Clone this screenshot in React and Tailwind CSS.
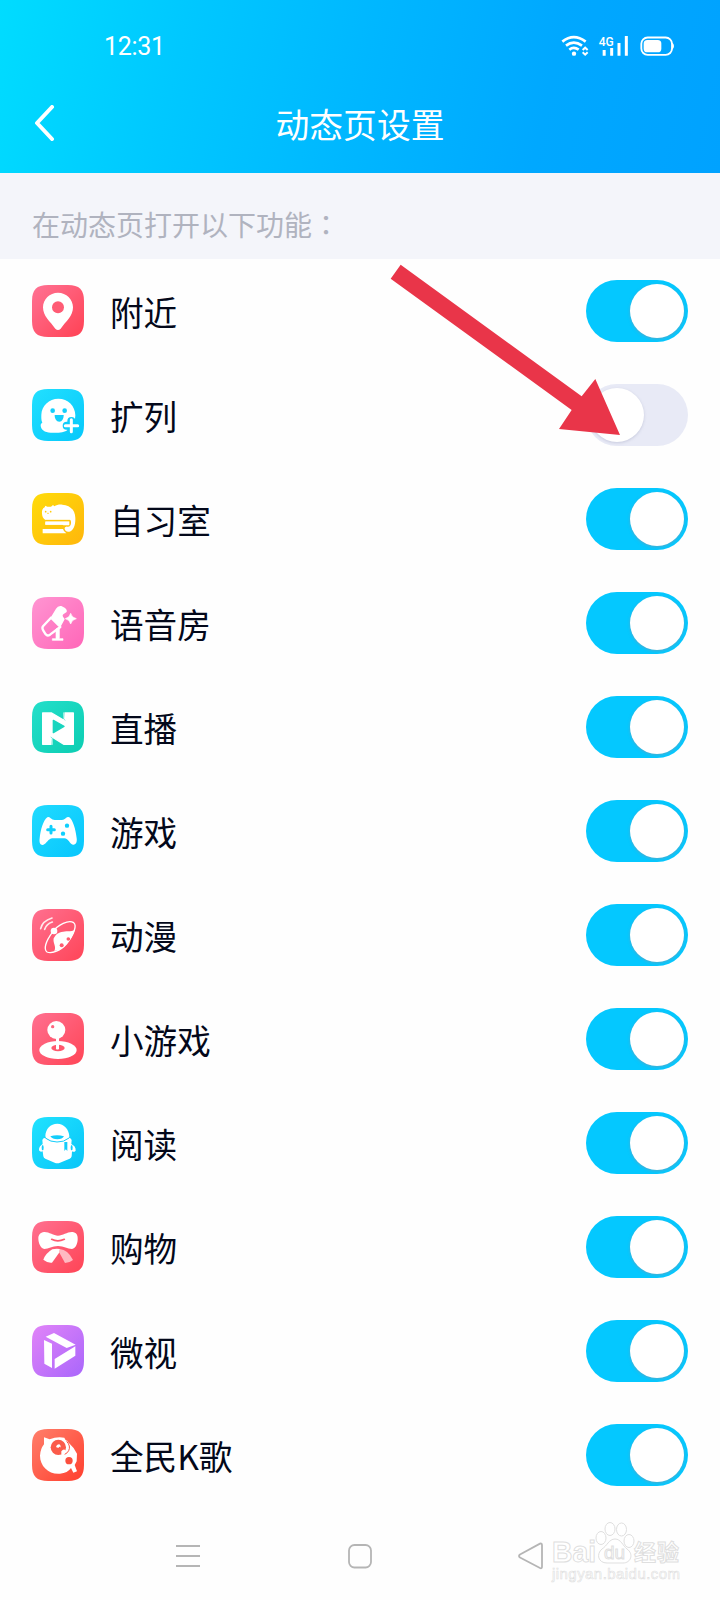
import React from "react";

const CJK = "font-['Noto_Sans_CJK_SC',sans-serif]";

/* Each glyph is drawn on a 156-unit square; `top` is the y origin of its drawing space. */
const ITEMS = [
  {
    id: "nearby", label: "附近", on: true, from: "#ff7294", to: "#ff4254", top: 45,
    glyph: (
      <>
        <path fill="#fff" d="M114 68C139 68 159 88 159 112C159 138 138 154 122 176Q114 184 106 176C90 154 69 138 69 112C69 88 89 68 114 68Z" />
        <circle cx="114" cy="112" r="18" fill="#ff5c75" />
      </>
    ),
  },
  {
    id: "expand", label: "扩列", on: false, from: "#22e0ff", to: "#06c8fb", top: 357,
    glyph: (
      <>
        <path fill="#fff" d="M115 386C144 386 166 408 166 436C166 466 146 488 116 488H92C74 488 62 479 62 466C62 462 64 460 67 458C63 450 64 440 64 434C65 407 87 386 115 386Z" />
        <circle cx="98" cy="422" r="7" fill="#12cffb" />
        <circle cx="134" cy="422" r="7" fill="#12cffb" />
        <path d="M104 435H131C131 447 126 455 118 455C109 455 104 447 104 435Z" fill="#12cffb" />
        <path d="M154 453V481M140 467H160" stroke="#0fcdfb" strokeWidth="24" strokeLinecap="round" />
        <path d="M154 449V485M136 467H173" stroke="#fff" strokeWidth="9" strokeLinecap="round" />
      </>
    ),
  },
  {
    id: "study", label: "自习室", on: true, from: "#ffdc0a", to: "#ffb60c", top: 39,
    glyph: (
      <>
        <path fill="#fff" d="M66 100C65 91 68 85 74 82L76 77L82 80L93 80L99 75L103 79C110 75 117 73 127 74C149 75 165 89 166 113C167 134 161 151 148 155C139 157 133 150 134 144C137 138 143 142 149 139C153 136 154 129 152 121H77C69 115 66 109 66 100Z" />
        <path fill="#fff" d="M76 124H148V136H130L127 134H76ZM68 147H129Q131 155 139 160H68Z" />
        <path fill="#fff" d="M76 127H146V134H76Z" />
        <path d="M76 121.500H150" stroke="#ffc60d" strokeWidth="4" />
        <path d="M72 141H130" stroke="#ffc60d" strokeWidth="7" />
        <circle cx="77" cy="95" r="2.500" fill="#ffcb0c" />
        <circle cx="92" cy="95" r="2.500" fill="#ffcb0c" />
        <path d="M81 99L84 101L87 99" stroke="#ffcb0c" strokeWidth="2" fill="none" />
      </>
    ),
  },
  {
    id: "voice", label: "语音房", on: true, from: "#ff95d2", to: "#ff66b8", top: 351,
    glyph: (
      <>
        <path fill="#fff" d="M93 411L108 386Q114 376 124 378L134 383Q142 388 140 396L130 403Q125 408 132 414L134 418L121 442Z" />
        <path d="M93 413L69 439Q65 444 70 452L77 463Q82 469 90 464L121 441L94 414Z" fill="none" stroke="#fff" strokeWidth="7" strokeLinejoin="round" />
        <path d="M119 441L108 447V476H97V481H129V476H118V446Z" fill="#fff" stroke="#fff" strokeWidth="2" strokeLinejoin="round" />
        <path fill="#fff" stroke="#fff" strokeWidth="2" strokeLinejoin="round" d="M152 400Q155 413 169 416Q155 419 152 432Q149 419 136 416Q149 413 152 400Z" />
      </>
    ),
  },
  {
    id: "live", label: "直播", on: true, from: "#24dfca", to: "#0ccdb2", top: 33,
    glyph: (
      <>
        <path fill="#fff" stroke="#fff" strokeWidth="4" strokeLinejoin="round" d="M68 69H95L132 91V69H160V163H132L96 141V163H68Z" />
        <path d="M100 91L132 109L100 128Z" fill="#19d5bf" stroke="#19d5bf" strokeWidth="4" strokeLinejoin="round" />
        <path d="M133 66L131 87L136 91M95 166L97 144L92 141" stroke="#19d5bf" strokeWidth="1.5" fill="none" />
      </>
    ),
  },
  {
    id: "games", label: "游戏", on: true, from: "#20dbff", to: "#07c6fd", top: 345,
    glyph: (
      <>
        <path fill="#fff" d="M82 382Q86 379 92 385Q97 390 104 390H126Q132 390 137 385Q143 379 148 382C158 388 168 421 170 445C172 459 166 465 159 464C149 463 146 445 133 445H97C85 445 80 462 69 465C61 466 57 458 59 445C61 421 71 388 82 382Z" />
        <path d="M93 409V429M83 419H103" stroke="#0fcffd" strokeWidth="9" strokeLinecap="round" />
        <circle cx="141" cy="407" r="6.500" fill="#0fcffd" />
        <circle cx="129" cy="431" r="6.500" fill="#0fcffd" />
      </>
    ),
  },
  {
    id: "anime", label: "动漫", on: true, from: "#ff7090", to: "#ff4558", top: 42,
    glyph: (
      <>
        <path d="M161 83C172 91 161 120 139 147C120 169 94 176 81 171C70 163 77 139 97 112C114 88 146 74 161 83Z" fill="none" stroke="#fff" strokeWidth="4" />
        <path fill="#fff" d="M107 121C117 111 131 109 144 109C152 109 160 107 164 104C159 125 143 147 126 160Q114 168 103 168C110 155 98 145 101 130Z" />
        <circle cx="102" cy="108" r="10" fill="#fff" />
        <circle cx="145" cy="132" r="5.500" fill="#ff5b70" />
        <circle cx="125" cy="151" r="6" fill="#ff5b70" />
        <path d="M62 101Q67 78 96 69M74 103Q79 87 97 81" fill="none" stroke="#fff" strokeWidth="5" strokeLinecap="round" opacity=".85" />
      </>
    ),
  },
  {
    id: "mini", label: "小游戏", on: true, from: "#ff7090", to: "#ff4556", top: 354,
    glyph: (
      <>
        <ellipse cx="114" cy="465" rx="56" ry="27" fill="#fff" />
        <ellipse cx="114" cy="459" rx="20" ry="10" fill="#ff586d" />
        <path d="M108 428H117V462Q112 465 108 462Z" fill="#fff" />
        <circle cx="109" cy="405" r="27" fill="#fff" />
        <circle cx="98" cy="395" r="5" fill="#ff6680" />
      </>
    ),
  },
  {
    id: "read", label: "阅读", on: true, from: "#20e2ff", to: "#08c5f8", top: 36,
    glyph: (
      <>
        <path fill="#fff" d="M112 56C132 56 147 73 148 94Q147 104 137 107Q112 119 88 106Q77 101 76 93C77 72 91 56 112 56Z" />
        <path fill="#fff" d="M76 98Q91 111 111 111Q131 112 147 98Q153 99 155 105L154 117C162 121 168 127 167 137Q162 143 156 139L155 154Q154 159 149 161L120 173Q112 177 104 173L76 161Q71 159 70 154L68 139Q61 143 57 136C56 127 62 121 68 117L67 105Q68 99 76 98Z" />
        <path d="M76 99Q91 111 111 111Q131 112 147 99" stroke="#13cdfb" strokeWidth="3" fill="none" />
        <path d="M91 94Q111 87 132 94Q127 103 112 103Q97 103 91 94Z" fill="#13cdfb" />
        <path d="M133 111H142V138L137.500 133L133 138Z" fill="#13cdfb" />
        <ellipse cx="68" cy="128" rx="3" ry="8" fill="#13cdfb" />
        <ellipse cx="155" cy="128" rx="3" ry="8" fill="#13cdfb" />
      </>
    ),
  },
  {
    id: "shop", label: "购物", on: true, from: "#ff7090", to: "#ff4455", top: 348,
    glyph: (
      <>
        <path fill="#fff" d="M72 381C87 380 100 392 114 392C129 392 142 380 157 381C169 382 173 390 173 400C174 414 167 431 156 432C142 432 132 423 114 423C96 423 86 432 73 432C61 430 55 414 55 400C55 390 61 382 72 381Z" />
        <path d="M95 403Q113 412 133 403" fill="none" stroke="#ff5a70" strokeWidth="5" strokeLinecap="round" />
        <path d="M97 433Q108 430 120 432L119 441L96 473Q84 475 70 464Q77 445 97 433Z" fill="#fff" />
        <path d="M119 432Q144 434 159 465Q148 474 135 474L117 441Z" fill="#ffb9c1" />
      </>
    ),
  },
  {
    id: "weishi", label: "微视", on: true, from: "#e184f8", to: "#a966fb", top: 45,
    glyph: (
      <path fill="#fff" d="M102 69L167 104L140 114L77 80ZM72 90L96 101V174L73 161ZM166 109V137L104 176V147Z" />
    ),
  },
  {
    id: "karaoke", label: "全民K歌", on: true, from: "#ff7f6b", to: "#ff3f2e", top: 357,
    glyph: (
      <>
        <path fill="#fff" d="M72 382L89 388Q110 379 133 383L137 391L146 398Q163 413 171 431L170 454L164 465L171 484L160 488L153 474Q143 489 120 491C87 494 60 469 60 437Q61 417 72 403Z" />
        <circle cx="115" cy="412" r="23" fill="#fb5b4a" />
        <path fill="#fff" d="M108 411Q110 402 118 403Q123 405 122 413Q119 408 116 413Q112 414 108 411Z" />
        <path fill="#fff" d="M126 390Q142 397 145 411Q145 424 135 431L136 420Q130 416 124 424Q122 433 128 439Q144 436 150 424L142 392Z" />
        <path d="M140 394Q153 408 146 422Q143 429 134 433" fill="none" stroke="#fb5443" strokeWidth="3" />
        <circle cx="147" cy="452" r="11" fill="#fb4f3e" />
      </>
    ),
  },
];

function AppIcon({ id, from, to, top, glyph }) {
  return (
    <svg className="size-[52px] shrink-0" viewBox={`36 ${top} 156 156`} fill="none">
      <defs>
        <linearGradient id={id} x1="0" y1="0" x2="1" y2="1">
          <stop stopColor={from} />
          <stop offset="1" stopColor={to} />
        </linearGradient>
      </defs>
      <path
        transform={`translate(36 ${top})`}
        fill={`url(#${id})`}
        d="M48 0H108C142 0 156 14 156 48V108C156 142 142 156 108 156H48C14 156 0 142 0 108V48C0 14 14 0 48 0Z"
      />
      {glyph}
    </svg>
  );
}

function Toggle({ on }) {
  return (
    <div
      role="switch"
      aria-checked={on}
      className={`flex h-[62px] w-[102px] items-center rounded-full px-1 ${on ? "justify-end bg-[#04c8ff]" : "justify-start bg-[#e8eaf6]"}`}
    >
      <div
        className={`size-[54px] rounded-full bg-white ${on ? "shadow-[0_1px_3px_0px_rgba(130,150,170,0.6)]" : "shadow-[0_1px_3px_0px_rgba(150,155,185,0.4)]"}`}
      />
    </div>
  );
}

function StatusIcons() {
  return (
    <svg className="h-6 w-[116px]" viewBox="600 102 348 72" fill="none">
      <path d="M607 125Q641 98 677 125M618 137Q641 119 666 137M628 149Q641 138 656 149" stroke="#fff" strokeWidth="8" />
      <circle cx="642" cy="161" r="6.500" fill="#fff" />
      <path d="M668 150L675.500 143L683 150M668 157L675.500 164L683 157" stroke="#fff" strokeWidth="6" />
      <text x="716" y="137" fill="#fff" fontSize="38" fontWeight="500" fontFamily="Roboto, sans-serif" textLength="45" lengthAdjust="spacingAndGlyphs">4G</text>
      <path d="M732.500 150V167M755 144V167M777 129V167M799 108V167" stroke="#fff" strokeWidth="9" />
      <rect x="844" y="112.500" width="92" height="52" rx="19" stroke="#fff" strokeWidth="5.500" />
      <rect x="851" y="120" width="53" height="37" rx="11" fill="#fff" />
      <path d="M936 128Q942 130 942 138Q942 147 936 149Z" fill="#fff" />
    </svg>
  );
}

function Watermark() {
  return (
    <svg className="absolute right-[32px] bottom-[8px] h-[74px] w-[140px]" viewBox="548 1518 140 74" fill="#fff" stroke="#dfdfdf" strokeWidth="1">
      <text x="552" y="1562" fontSize="29" fontWeight="700" fontFamily="Liberation Sans, sans-serif" textLength="44" lengthAdjust="spacingAndGlyphs">Bai</text>
      <ellipse cx="601" cy="1538" rx="5" ry="6.500" />
      <ellipse cx="610" cy="1529" rx="5" ry="6.500" />
      <ellipse cx="621.500" cy="1529.500" rx="5" ry="6.500" />
      <ellipse cx="629" cy="1541" rx="5" ry="6.500" />
      <path d="M615 1539C621 1539 623 1546 627 1549C634 1554 631 1563 623 1563H607C598 1563 596 1554 602 1549C607 1546 609 1539 615 1539Z" />
      <text x="604" y="1559" fontSize="19" fontFamily="Liberation Sans, sans-serif" textLength="21">du</text>
      <text x="634" y="1560" fontSize="22" fontWeight="700" fontFamily="Noto Sans CJK SC, sans-serif" textLength="45">经验</text>
      <text x="552" y="1579" fontSize="15" fontFamily="Liberation Sans, sans-serif" textLength="128" strokeWidth=".6">jingyan.baidu.com</text>
    </svg>
  );
}

export default function App() {
  return (
    <div className={`relative flex h-[1600px] w-[720px] flex-col overflow-hidden bg-[#fefefe] ${CJK}`}>
      <header className="flex h-[173px] shrink-0 flex-col bg-[linear-gradient(102deg,#00dcff_0%,#00c8ff_25%,#00b7ff_50%,#00a8ff_75%,#00a2ff_100%)] text-white">
        <div className="flex h-[92px] items-center justify-between pr-[44px] pl-[104px]">
          <span className="font-[Roboto,sans-serif] text-[25px] leading-none tracking-[-0.3px]">12:31</span>
          <StatusIcons />
        </div>
        <div className="grid h-[64px] grid-cols-[72px_1fr_72px] items-center">
          <svg className="mb-[2px] ml-[33px] h-9 w-[22px]" viewBox="0 0 22 36" fill="none" stroke="#fff" strokeWidth="4" strokeLinecap="round" strokeLinejoin="round">
            <path d="M19 2L4 18L19 34" />
          </svg>
          <h1 className="text-center text-[33.8px] leading-none font-normal">动态页设置</h1>
        </div>
      </header>
      <div className="flex h-[86px] shrink-0 items-center bg-[#f4f5fa] pt-[16px] pl-8 text-[28px] leading-none text-[#b0b3bf]">
        在动态页打开以下功能
        <span className="font-['Noto_Sans_CJK_TC',sans-serif]" lang="zh-Hant">：</span>
      </div>
      <main className="flex flex-col bg-[#fefefe]">
        {ITEMS.map((item) => (
          <div key={item.id} className="flex h-[104px] items-center pr-8 pl-8">
            <AppIcon {...item} />
            <span className="grow pt-[2px] pl-[26px] text-[33.6px] leading-none text-[#03081a]">{item.label}</span>
            <Toggle on={item.on} />
          </div>
        ))}
      </main>
      <nav className="flex grow items-center justify-between pt-[5px] pr-[176px] pl-[175px]">
        <svg className="h-[30px] w-[26px]" viewBox="0 0 26 30" stroke="#b5b5b5" strokeWidth="1.8"><path d="M1 5H25M1 15H25M1 25H25" /></svg>
        <svg className="h-[30px] w-[26px]" viewBox="0 0 26 30" fill="none" stroke="#b5b5b5" strokeWidth="1.8"><rect x="2" y="4" width="22" height="22.500" rx="5.500" /></svg>
        <svg className="h-[30px] w-[26px]" viewBox="0 0 26 30" fill="none" stroke="#b5b5b5" strokeWidth="1.8" strokeLinejoin="round"><path d="M22 2.600Q24 2 24 4.500V25.500Q24 28 22 27L2 16.500Q0 15 2 13.500Z" /></svg>
      </nav>
      <svg className="absolute top-[250px] left-[360px] h-[190px] w-[270px]" viewBox="0 0 810 570">
        <path d="M122 44L665 439L706 387L780 555L597 537L635 480L92 86Z" fill="#e93549" />
      </svg>
      <Watermark />
    </div>
  );
}
